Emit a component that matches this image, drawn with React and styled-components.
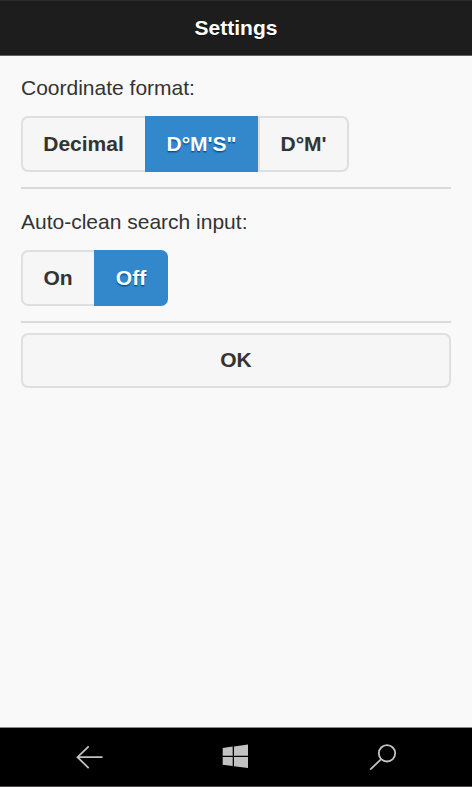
import React, { useState } from 'react';
import styled, { createGlobalStyle, css } from 'styled-components';

const GlobalStyle = createGlobalStyle`
  * {
    box-sizing: border-box;
  }
  body {
    margin: 0;
    background-color: #f9f9f9;
  }
`;

const Screen = styled.div`
  display: flex;
  flex-direction: column;
  width: 100%;
  height: 100vh;
  background-color: #f9f9f9;
  color: #333333;
  font-family: 'Liberation Sans', Arial, Helvetica, sans-serif;
  font-size: 21px;
  line-height: 28px;
`;

const Header = styled.header`
  flex: none;
  height: 56px;
  padding-top: 13px;
  border-top: 1px solid #2b2b2b;
  border-bottom: 1px solid #626262;
  background-color: #1d1d1d;
`;

const Title = styled.h1`
  margin: 0;
  font-size: 21px;
  line-height: 28px;
  font-weight: bold;
  text-align: center;
  color: #ffffff;
  text-shadow: 0 1px 0 #111111;
`;

const Content = styled.main`
  display: flex;
  flex-direction: column;
  flex: 1;
  padding: 18px 21px 0;
`;

const Setting = styled.section`
  height: ${props => props.$height}px;
  margin-bottom: ${props => props.$gap}px;
  border-bottom: 2px solid #dadada;
`;

const Label = styled.div`
  height: 28px;
  margin-bottom: 14px;
`;

const ButtonGroup = styled.div`
  display: flex;
`;

const Button = styled.button`
  height: 56px;
  padding: 0;
  border: 2px solid #dfdfdf;
  border-radius: 7px;
  background-color: #f6f6f6;
  color: #333333;
  font-family: inherit;
  font-size: 21px;
  font-weight: bold;
  line-height: 28px;
  text-shadow: 0 1px 0 #f3f3f3;
  cursor: pointer;
`;

const OptionButton = styled(Button)`
  width: ${props => props.$width}px;
  border-radius: 0;
  &:first-child {
    padding-right: 1px;
    border-right: 0;
    border-radius: 7px 0 0 7px;
  }
  &:last-child {
    border-radius: 0 7px 7px 0;
  }
  ${props => {
    if (props.$selected) {
      return css`
        border-color: #3388cc;
        background-color: #3388cc;
        color: #ffffff;
        text-shadow: 0 1px 0 #005599, 0 2px 1px rgba(0, 85, 153, 0.5);
      `;
    }
  }}
`;

const OkButton = styled(Button)`
  width: 100%;
  height: 55px;
  padding-bottom: 1px;
`;

const NavBar = styled.nav`
  flex: none;
  display: grid;
  grid-template-columns: 178px 114px 180px;
  align-items: center;
  justify-items: center;
  height: 60px;
  border-top: 1px solid #8a8a8a;
  border-bottom: 1px solid #4d4a4c;
  background-color: #000000;
`;

const NavIcon = styled.svg`
  display: block;
  width: 30px;
  height: 30px;
  fill: none;
  stroke: #c2c2c2;
  stroke-width: 1.8;
`;

const coordinateFormats = [
  { name: 'Decimal', width: 124 },
  { name: 'D°M\'S"', width: 113 },
  { name: "D°M'", width: 91 },
];

const autoCleanStates = [
  { name: 'On', width: 73 },
  { name: 'Off', width: 74 },
];

function OptionGroup(props) {
  return (
    <ButtonGroup>
      {props.options.map(option => (
        <OptionButton
          key={option.name}
          $width={option.width}
          $selected={option.name === props.value}
          onClick={() => props.onSelect(option.name)}
        >
          {option.name}
        </OptionButton>
      ))}
    </ButtonGroup>
  );
}

function App() {
  const [format, setFormat] = useState('D°M\'S"');
  const [autoClean, setAutoClean] = useState('Off');

  return (
    <>
      <GlobalStyle />
      <Screen>
        <Header>
          <Title>Settings</Title>
        </Header>
        <Content>
          <Setting $height={115} $gap={19}>
            <Label>Coordinate format:</Label>
            <OptionGroup
              options={coordinateFormats}
              value={format}
              onSelect={setFormat}
            />
          </Setting>
          <Setting $height={115} $gap={10}>
            <Label>Auto-clean search input:</Label>
            <OptionGroup
              options={autoCleanStates}
              value={autoClean}
              onSelect={setAutoClean}
            />
          </Setting>
          <OkButton>OK</OkButton>
        </Content>
        <NavBar>
          <NavIcon viewBox="0 0 30 30">
            <path d="M28.5 15.2H3.2M14.7 4.3L3.5 15.2L14.7 26.1" />
          </NavIcon>
          <NavIcon viewBox="0 0 30 30">
            <g fill="#c2c2c2" stroke="none">
              <path d="M2.7 6L12.7 4.6V13.7H2.7Z" />
              <path d="M14 4.4L28 2.6V13.7H14Z" />
              <path d="M2.7 14.9H12.7V24.1L2.7 22.7Z" />
              <path d="M14 14.9H28V26.1L14 24.3Z" />
            </g>
          </NavIcon>
          <NavIcon viewBox="0 0 30 30">
            <circle cx="20" cy="11.3" r="8.2" />
            <path d="M14.2 17.1L3.2 27.6" />
          </NavIcon>
        </NavBar>
      </Screen>
    </>
  );
}

export default App;
